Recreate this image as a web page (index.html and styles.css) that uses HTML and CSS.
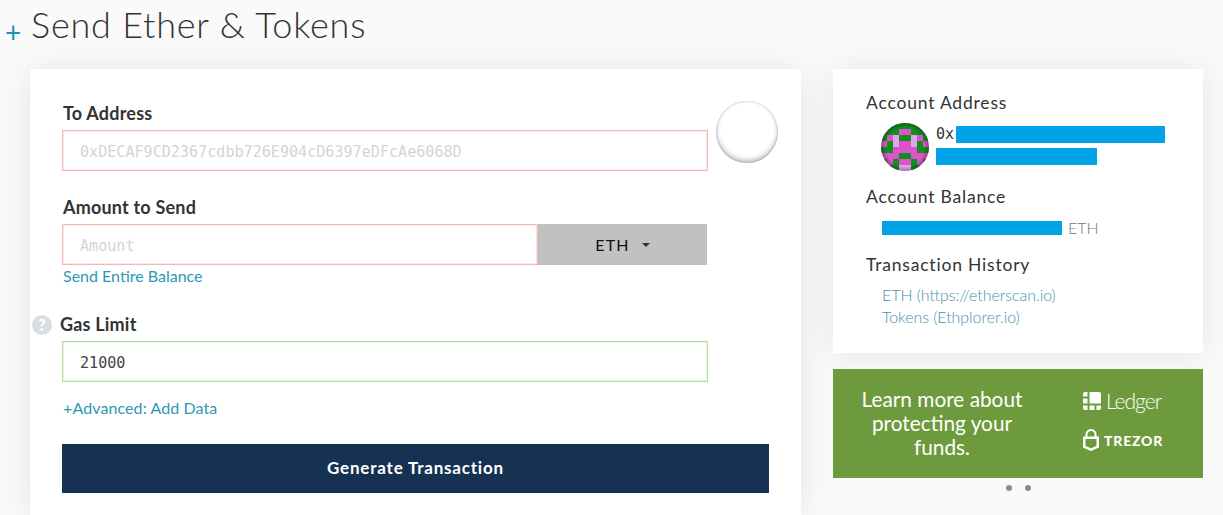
FILE: index.html
```html
<!DOCTYPE html>
<html lang="en">
<head>
    <meta charset="UTF-8">
    <meta name="viewport" content="width=device-width, initial-scale=1.0">
    <title>Send Ether &amp; Tokens</title>
    <link rel="stylesheet" href="styles.css">
</head>
<body>

<header class="page-head">
    <span class="head-plus">+</span>
    <h1>Send Ether &amp; Tokens</h1>
</header>

<div class="columns">
    <main class="card send-card">
        <div class="address-row">
            <div class="field address-field">
                <label>To Address</label>
                <div class="input input-bad mono placeholder">0xDECAF9CD2367cdbb726E904cD6397eDFcAe6068D</div>
            </div>
            <div class="blank-identicon"></div>
        </div>

        <div class="field amount-field">
            <label>Amount to Send</label>
            <div class="amount-row">
                <div class="input input-bad mono placeholder amount-input">Amount</div>
                <div class="unit-btn">ETH <span class="caret"></span></div>
            </div>
            <a class="link entire-link" href="#">Send Entire Balance</a>
        </div>

        <div class="field gas-field">
            <label><span class="help-icon">?</span>Gas Limit</label>
            <div class="input input-good mono">21000</div>
        </div>

        <a class="link advanced-link" href="#">+Advanced: Add Data</a>

        <button class="generate-btn" type="button">Generate Transaction</button>
    </main>

    <aside class="side">
        <section class="card info-card">
            <h5>Account Address</h5>
            <div class="address-line">
                <svg class="identicon" width="48" height="48" viewBox="0 0 8 8">
                    <defs>
                        <radialGradient id="ball">
                            <stop offset="0.8" stop-color="#000" stop-opacity="0"/>
                            <stop offset="1" stop-color="#000" stop-opacity="0.3"/>
                        </radialGradient>
                    </defs>
                    <g shape-rendering="crispEdges">
                        <rect width="8" height="8" fill="#e052cc"/>
                        <path fill="#0f8f1e" d="M0 0h8v1H0zM0 1h3v1H0zM5 1h3v1H5zM0 2h1v1H0zM3 2h2v1H3zM7 2h1v1H7zM1 3h1v1H1zM6 3h1v1H6zM0 4h2v1H0zM6 4h2v1H6zM3 5h2v1H3zM0 6h1v1H0zM2 6h1v1H2zM5 6h1v1H5zM7 6h1v1H7zM0 7h3v1H0zM5 7h3v1H5z"/>
                        <path fill="#dda6e6" d="M2 2h1v2H2zM5 2h1v2H5zM3 7h2v1H3z"/>
                    </g>
                    <circle cx="4" cy="4" r="4" fill="url(#ball)"/>
                </svg>
                <div class="address-text mono">
                    <div class="address-first">0x<span class="redact redact-a"></span></div>
                    <span class="redact redact-b"></span>
                </div>
            </div>

            <h5>Account Balance</h5>
            <div class="balance-line"><span class="redact redact-c"></span><span class="unit">ETH</span></div>

            <h5>Transaction History</h5>
            <ul class="history">
                <li><a href="#">ETH (https://etherscan.io)</a></li>
                <li><a href="#">Tokens (Ethplorer.io)</a></li>
            </ul>
        </section>

        <section class="promo">
            <p>Learn more about protecting your funds.</p>
            <div class="promo-logos">
                <div class="logo-ledger">
                    <svg width="18" height="18" viewBox="0 0 18 18" fill="#fff">
                        <path d="M6.500 0H16a2 2 0 0 1 2 2v9.500H6.500z"/>
                        <path d="M0 2a2 2 0 0 1 2-2h2.500v4.500H0zM0 6.500h4.500v5H0zM0 13.500h4.500V18H2a2 2 0 0 1-2-2zM6.500 13.500h5V18h-5zM13.500 13.500H18V16a2 2 0 0 1-2 2h-2.500z"/>
                    </svg>
                    <span>Ledger</span>
                </div>
                <div class="logo-trezor">
                    <svg width="16" height="22" viewBox="0 0 16 22" fill="none" stroke="#fff">
                        <path stroke-width="2" d="M3.500 8V5.500a4.500 4.500 0 0 1 9 0V8"/>
                        <path fill="#fff" stroke="none" d="M0 7.500h16v11L8 22l-8-3.500z"/>
                        <path fill="#6d9a3c" stroke="none" d="M2.500 10h11v7L8 19.300 2.500 17z"/>
                    </svg>
                    <span>TREZOR</span>
                </div>
            </div>
        </section>
        <div class="promo-dots"><i></i><i></i></div>
    </aside>
</div>

</body>
</html>
```

FILE: styles.css
```css
html, body {
    height: 515px;
    overflow: hidden;
}
body {
    margin: 0;
    background-color: #fafafa;
    color: #333;
    font-family: Lato, sans-serif;
}
.mono {
    font-family: "DejaVu Sans Mono", monospace;
}
.page-head {
    display: flex;
    align-items: flex-start;
    height: 69px;
    padding-left: 5px;
    box-sizing: border-box;
}
.head-plus {
    width: 26px;
    margin-top: 16px;
    font-size: 28px;
    line-height: 32px;
    font-weight: 400;
    color: #1f94b0;
}
h1 {
    margin: 3px 0 0;
    font-size: 36px;
    line-height: 43px;
    font-weight: 300;
    letter-spacing: 0.8px;
    color: #333;
}
.columns {
    display: flex;
    gap: 32px;
    padding-left: 30px;
}
.card {
    background: #fff;
    box-shadow: 0 2px 32px rgba(0, 0, 0, 0.09);
}
.send-card {
    width: 771px;
    box-sizing: border-box;
    height: 446px;
    padding: 32px 32px 0;
}
.address-row {
    display: flex;
    gap: 8px;
}
.field label {
    display: block;
    padding-left: 1px;
    font-size: 18px;
    line-height: 24px;
    font-weight: 700;
    letter-spacing: 0.2px;
    color: #333;
    margin-bottom: 5px;
}
.address-field {
    flex: none;
    width: 646px;
}
.input {
    box-sizing: border-box;
    height: 41px;
    padding: 0 17px;
    background: #fff;
    border: 1px solid #fff;
    font-size: 15.100px;
    line-height: 43px;
    color: #444;
}
.placeholder {
    color: #d4d4d4;
}
.input-bad {
    border-color: #f4b9b2;
    box-shadow: inset 0 0 0 1px #fce6e4;
}
.input-good {
    border-color: #b4dca6;
    box-shadow: inset 0 0 0 1px #e6f4e1;
}
.blank-identicon {
    flex: none;
    width: 62px;
    height: 62px;
    border-radius: 50%;
    background: #fff;
    box-shadow: inset 0 -3px 5px rgba(0, 0, 0, 0.25), inset 0 0 2px rgba(0, 0, 0, 0.3);
}
.amount-field {
    margin-top: 24px;
}
.amount-row {
    display: flex;
    width: 645px;
}
.amount-input {
    flex: none;
    width: 476px;
}
.unit-btn {
    display: flex;
    align-items: center;
    justify-content: center;
    gap: 12px;
    flex: 1;
    background: #c1c1c1;
    font-size: 16px;
    font-weight: 400;
    letter-spacing: 1.2px;
    color: #111;
}
.caret {
    border-top: 4px solid #333;
    border-left: 4px solid transparent;
    border-right: 4px solid transparent;
}
.link {
    display: block;
    padding-left: 1px;
    font-size: 16px;
    line-height: 22px;
    color: #2f97b3;
    text-decoration: none;
}
.gas-field {
    margin-top: 25px;
}
.gas-field label {
    position: relative;
    padding-left: 0;
    margin-left: -2px;
}
.gas-field .input {
    width: 646px;
}
.help-icon {
    position: absolute;
    left: -28px;
    top: 3px;
    width: 20px;
    height: 20px;
    border-radius: 50%;
    background: #d9dfe1;
    color: #fff;
    font-size: 16px;
    line-height: 20px;
    font-weight: 900;
    text-align: center;
}
.advanced-link {
    margin-top: 15px;
    letter-spacing: 0.1px;
}
.generate-btn {
    display: block;
    width: 100%;
    height: 49px;
    margin-top: 25px;
    padding: 0 0 2px;
    border: none;
    background: #163151;
    color: #fff;
    font-family: Lato, sans-serif;
    font-size: 17px;
    font-weight: 700;
    letter-spacing: 0.8px;
}
.side {
    width: 370px;
}
.info-card {
    box-sizing: border-box;
    height: 284px;
    padding: 21px 32px 0 33px;
}
h5 {
    margin: 0;
    font-size: 17.500px;
    line-height: 26px;
    font-weight: 400;
    letter-spacing: 0.8px;
    color: #333;
}
.address-line {
    display: flex;
    gap: 7px;
    margin: 7px 0 13px 15px;
}
.identicon {
    border-radius: 50%;
}
.address-text {
    font-size: 15px;
    line-height: 17px;
}
.address-first {
    display: flex;
    height: 22px;
    margin-top: 3px;
}
.redact {
    display: block;
    background: #00a3e8;
}
.redact-a {
    width: 209px;
    height: 17px;
    margin-left: 2px;
}
.redact-b {
    width: 161px;
    height: 17px;
}
.redact-c {
    width: 180px;
    height: 14px;
}
.balance-line {
    display: flex;
    align-items: center;
    gap: 6px;
    margin: 8px 0 15px 16px;
}
.unit {
    font-size: 16px;
    font-weight: 300;
    color: #777;
}
.history {
    list-style: none;
    margin: 6px 0 0 16px;
    padding: 0;
    font-size: 15.900px;
    line-height: 22px;
    font-weight: 300;
}
.history a {
    color: #3f93ad;
    text-decoration: none;
}
.promo {
    display: flex;
    align-items: center;
    height: 109px;
    margin-top: 16px;
    background: #6d9a3c;
    color: #fff;
}
.promo p {
    flex: none;
    box-sizing: border-box;
    width: 218px;
    margin: 0;
    padding: 0 25px 2px;
    font-size: 20.800px;
    line-height: 24px;
    text-align: center;
}
.promo-logos {
    display: flex;
    flex-direction: column;
    gap: 15px;
    padding: 0 0 8px 32px;
}
.logo-ledger, .logo-trezor {
    display: flex;
    align-items: center;
    gap: 5px;
}
.logo-ledger span {
    font-size: 21px;
    line-height: 26px;
    font-weight: 300;
    letter-spacing: -1px;
}
.logo-trezor span {
    font-size: 14px;
    font-weight: 900;
    letter-spacing: 0.8px;
}
.promo-dots {
    display: flex;
    justify-content: center;
    gap: 13px;
    margin-top: 7px;
}
.promo-dots i {
    width: 6px;
    height: 6px;
    border-radius: 50%;
    background: #8c8c8c;
}
```
